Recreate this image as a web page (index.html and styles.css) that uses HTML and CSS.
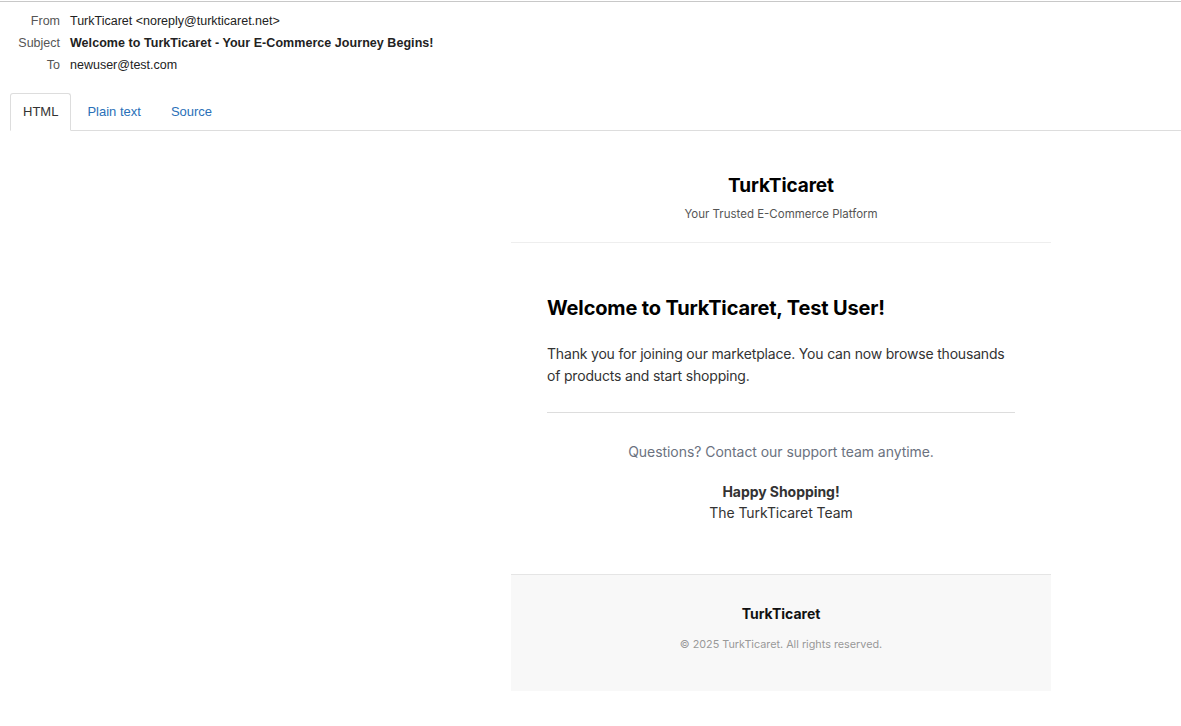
FILE: index.html
```html
<!DOCTYPE html>
<html>
<head>
<meta charset="utf-8">
<link rel="stylesheet" href="styles.css">
</head>
<body>
<div class="topline"></div>
<div class="meta">
  <div class="row"><span class="label">From</span><span class="value">TurkTicaret &lt;noreply@turkticaret.net&gt;</span></div>
  <div class="row"><span class="label">Subject</span><span class="value bold">Welcome to TurkTicaret - Your E-Commerce Journey Begins!</span></div>
  <div class="row"><span class="label">To</span><span class="value">newuser@test.com</span></div>
</div>
<div class="tabs">
  <div class="tab active">HTML</div>
  <div class="tab">Plain text</div>
  <div class="tab">Source</div>
</div>
<div class="frame">
  <div class="email">
    <div class="ehead">
      <div class="brand">TurkTicaret</div>
      <div class="tagline">Your Trusted E-Commerce Platform</div>
    </div>
    <div class="ebody">
      <h1 class="title">Welcome to TurkTicaret, Test User!</h1>
      <p class="intro">Thank you for joining our marketplace. You can now browse thousands of products and start shopping.</p>
      <div class="rule"></div>
      <p class="question">Questions? Contact our support team anytime.</p>
      <div class="sign">
        <div class="sign-b">Happy Shopping!</div>
        <div>The TurkTicaret Team</div>
      </div>
    </div>
    <div class="efoot">
      <div class="fbrand">TurkTicaret</div>
      <div class="copy">© 2025 TurkTicaret. All rights reserved.</div>
    </div>
  </div>
</div>
</body>
</html>
```
FILE: styles.css
```css
* { box-sizing: border-box; }
html, body { margin: 0; padding: 0; background: #fff; }
body { font-family: "Liberation Sans", Arial, sans-serif; color: #222; }
.topline { height: 1px; background: #c8c8c8; margin-top: 1px; }
.meta { padding-top: 8px; }
.row { display: flex; height: 22px; align-items: center; font-size: 12.5px; }
.label { width: 60px; text-align: right; color: #555; }
.value { margin-left: 10px; color: #222; }
.bold { font-weight: bold; letter-spacing: 0.05px; }
.tabs { display: flex; margin: 17px 0 0 10px; border-bottom: 1px solid #ddd; height: 38px; }
.tab { font-size: 13px; padding: 0 14px; line-height: 36px; color: #2a70b8; margin-bottom: -1px; border: 1px solid transparent; border-radius: 3px 3px 0 0; }
.tab.active { color: #333; border-color: #ddd; border-bottom-color: #fff; background: #fff; padding: 0 12px; }
.tab + .tab { margin-left: 1px; }
.tab:last-child { padding-left: 13px; }
.frame { padding: 20px 0 0 511px; }
.email { width: 540px; font-family: Inter, "Noto Sans", sans-serif; color: #333; }
.ehead { text-align: center; padding: 21px 0 20px; border-bottom: 1px solid #eee; }
.brand { font-size: 19px; font-weight: 700; color: #000; line-height: 28px; letter-spacing: -0.1px; }
.tagline { font-size: 11.5px; color: #555; margin-top: 6px; line-height: 16px; }
.ebody { padding: 50px 36px 51px; }
.title { font-size: 20px; font-weight: 700; color: #000; margin: 0; line-height: 30px; letter-spacing: -0.15px; }
.intro { font-size: 14px; line-height: 22px; margin: 20px 0 0; color: #333; letter-spacing: -0.18px; }
.rule { height: 1px; background: #ddd; margin-top: 25px; }
.question { text-align: center; font-size: 14px; color: #6b7280; margin: 28px 0 0; line-height: 22px; letter-spacing: -0.05px; }
.sign { text-align: center; font-size: 14px; line-height: 21px; margin-top: 18px; color: #333; letter-spacing: -0.05px; }
.sign-b { font-weight: 700; }
.efoot { background: #f8f8f8; border-top: 1px solid #e5e5e5; text-align: center; padding: 29px 0 38px; }
.fbrand { font-size: 14px; font-weight: 700; color: #111; line-height: 20px; }
.copy { font-size: 10.8px; color: #999; margin-top: 13px; line-height: 16px; }
```
